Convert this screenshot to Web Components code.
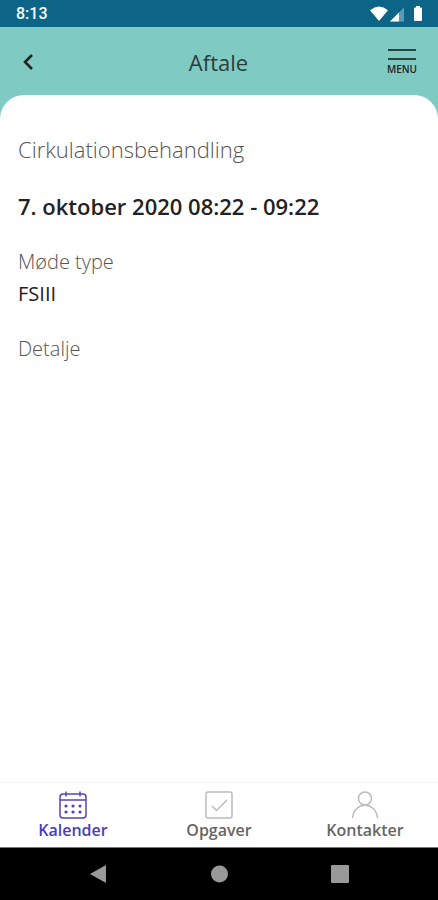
<!DOCTYPE html>
<html lang="da">
<head>
<meta charset="utf-8">
<meta name="viewport" content="width=device-width, initial-scale=1">
<title>Aftale</title>
<style>
  body {
    margin: 0;
    background: #fff;
    font-family: "Open Sans", "Noto Sans", sans-serif;
  }
</style>
</head>
<body>
<calendar-app></calendar-app>

<script>
customElements.define('status-bar', class extends HTMLElement {
  constructor() {
    super();
    this.attachShadow({ mode: 'open' }).innerHTML = `
      <style>
        :host {
          display: flex;
          align-items: center;
          justify-content: space-between;
          height: 27px;
          padding: 0 16px;
          box-sizing: border-box;
          background: #0c6587;
          color: #fff;
          font: 500 16px/28px Roboto, sans-serif;
        }
        svg { display: block; }
        .icons { display: flex; gap: 2px; margin-right: -2px; }
      </style>
      <span><slot></slot></span>
      <span class="icons">
        <svg width="18" height="16" viewBox="0 0 18 16" fill="#fff"><path d="M0 4.200Q9-3 18 4.200L9 15Z"/></svg>
        <svg width="15" height="16" viewBox="0 0 15 16"><path d="M0 15.500 14 1.500V15.500Z" fill="#5c9bb3"/><path d="M0 15.500 9 6.500V15.500Z" fill="#fff"/></svg>
        <svg width="17" height="16" viewBox="0 0 17 16" fill="#fff"><path d="M9 0h4v1.500h1q1 0 1 1V14q0 1-1 1H8q-1 0-1-1V2.500q0-1 1-1h1Z"/></svg>
      </span>
    `;
  }
});

customElements.define('page-header', class extends HTMLElement {
  constructor() {
    super();
    this.attachShadow({ mode: 'open' }).innerHTML = `
      <style>
        :host {
          display: grid;
          grid-template-columns: 1fr auto 1fr;
          align-items: center;
          height: 68px;
          padding: 1px 21px 0 20px;
          box-sizing: border-box;
          color: #303b3b;
        }
        h1 { margin: 0; font-size: 22px; line-height: 30px; font-weight: 400; }
        button {
          padding: 0;
          border: none;
          background: none;
          color: #222;
          font: inherit;
          cursor: pointer;
        }
        svg { display: block; }
        .back { justify-self: start; }
        .menu {
          justify-self: end;
          display: grid;
          justify-items: center;
          gap: 2px;
          font-size: 10px;
          line-height: 12px;
          font-weight: 600;
        }
      </style>
      <button class="back" aria-label="Tilbage">
        <svg width="16" height="18" viewBox="0 0 16 18" fill="none" stroke="#222" stroke-width="2.600"><path d="M12 2 5 9l7 7"/></svg>
      </button>
      <h1><slot></slot></h1>
      <button class="menu">
        <svg width="30" height="13" viewBox="0 0 30 13" stroke="#29413f" stroke-width="2"><path d="M1 2h28M1 11h28"/></svg>
        <span>MENU</span>
      </button>
    `;
  }
});

customElements.define('detail-field', class extends HTMLElement {
  constructor() {
    super();
    this.attachShadow({ mode: 'open' }).innerHTML = `
      <style>
        :host { display: block; font-size: 20px; line-height: 32px; color: #222; }
        .label { font-weight: 300; color: #555; }
      </style>
      <div class="label"><slot name="label"></slot></div>
      <div><slot></slot></div>
    `;
  }
});

customElements.define('appointment-card', class extends HTMLElement {
  constructor() {
    super();
    this.attachShadow({ mode: 'open' }).innerHTML = `
      <style>
        :host {
          display: flex;
          flex-direction: column;
          gap: 23px;
          flex: 1;
          padding: 37px 18px;
          border-radius: 24px 24px 0 0;
          background: #fff;
        }
        h2, p { margin: 0; font-size: 22px; line-height: 34px; }
        h2 { font-weight: 300; color: #555; }
        p { font-weight: 600; color: #222; }
      </style>
      <h2><slot name="title"></slot></h2>
      <p><slot name="time"></slot></p>
      <slot></slot>
    `;
  }
});

const TAB_ICONS = {
  calendar: `
    <rect x="1" y="3" width="26" height="24" rx="3"/>
    <path d="M1 9h26M7 0.500v5M21 0.500v5"/>
    <path d="M7 15h.01M14 15h.01M21 15h.01M7 21h.01M14 21h.01M21 21h.01" stroke-width="3.200" stroke-linecap="round"/>`,
  task: `
    <rect x="1" y="1" width="26" height="26" rx="2"/>
    <path d="m7 15 4.500 4.500L22 9"/>`,
  person: `
    <circle cx="14" cy="7.500" r="6.500"/>
    <path d="M1.500 27C3 10 25 10 26.500 27"/>`
};

customElements.define('tab-item', class extends HTMLElement {
  constructor() {
    super();
    this.attachShadow({ mode: 'open' }).innerHTML = `
      <style>
        :host { display: block; flex: 1; color: #666; --icon-color: #bbb; }
        :host([active]) { color: #4b3bbd; --icon-color: #5444b8; }
        a {
          display: grid;
          justify-items: center;
          color: inherit;
          font-size: 16px;
          line-height: 22px;
          font-weight: 600;
          text-decoration: none;
        }
        svg { fill: none; stroke: var(--icon-color); stroke-width: 1.500; }
      </style>
      <a href="#">
        <svg width="28" height="28" viewBox="0 0 28 28">${TAB_ICONS[this.getAttribute('icon')]}</svg>
        <span><slot></slot></span>
      </a>
    `;
  }
});

customElements.define('tab-bar', class extends HTMLElement {
  constructor() {
    super();
    this.attachShadow({ mode: 'open' }).innerHTML = `
      <style>
        :host { display: block; background: #fff; border-top: 1px solid #f3f3f3; }
        nav { display: flex; padding: 8px 0 6px; }
      </style>
      <nav><slot></slot></nav>
    `;
  }
});

customElements.define('system-nav', class extends HTMLElement {
  constructor() {
    super();
    this.attachShadow({ mode: 'open' }).innerHTML = `
      <style>
        :host {
          display: flex;
          align-items: center;
          justify-content: center;
          gap: 101px;
          height: 53px;
          border-top: 1px solid #777;
          box-sizing: border-box;
          background: #000;
        }
        button { padding: 0; border: none; background: none; cursor: pointer; }
        svg { display: block; fill: #999; }
      </style>
      <button aria-label="Tilbage"><svg width="20" height="20" viewBox="0 0 20 20"><path d="M18 1v18L2 10Z"/></svg></button>
      <button aria-label="Hjem"><svg width="20" height="20" viewBox="0 0 20 20"><circle cx="10.500" cy="10" r="8.500"/></svg></button>
      <button aria-label="Seneste"><svg width="20" height="20" viewBox="0 0 20 20"><rect x="1" y="1" width="18" height="18" rx="1"/></svg></button>
    `;
  }
});

customElements.define('calendar-app', class extends HTMLElement {
  constructor() {
    super();
    this.attachShadow({ mode: 'open' }).innerHTML = `
      <style>
        :host {
          display: flex;
          flex-direction: column;
          min-height: 100vh;
          background: #7fcbc3;
        }
      </style>
      <status-bar>8:13</status-bar>
      <page-header>Aftale</page-header>
      <appointment-card>
        <span slot="title">Cirkulationsbehandling</span>
        <span slot="time">7. oktober 2020 08:22 - 09:22</span>
        <detail-field><span slot="label">Møde type</span>FSIII</detail-field>
        <detail-field><span slot="label">Detalje</span></detail-field>
      </appointment-card>
      <tab-bar>
        <tab-item icon="calendar" active>Kalender</tab-item>
        <tab-item icon="task">Opgaver</tab-item>
        <tab-item icon="person">Kontakter</tab-item>
      </tab-bar>
      <system-nav></system-nav>
    `;
  }
});
</script>
</body>
</html>
